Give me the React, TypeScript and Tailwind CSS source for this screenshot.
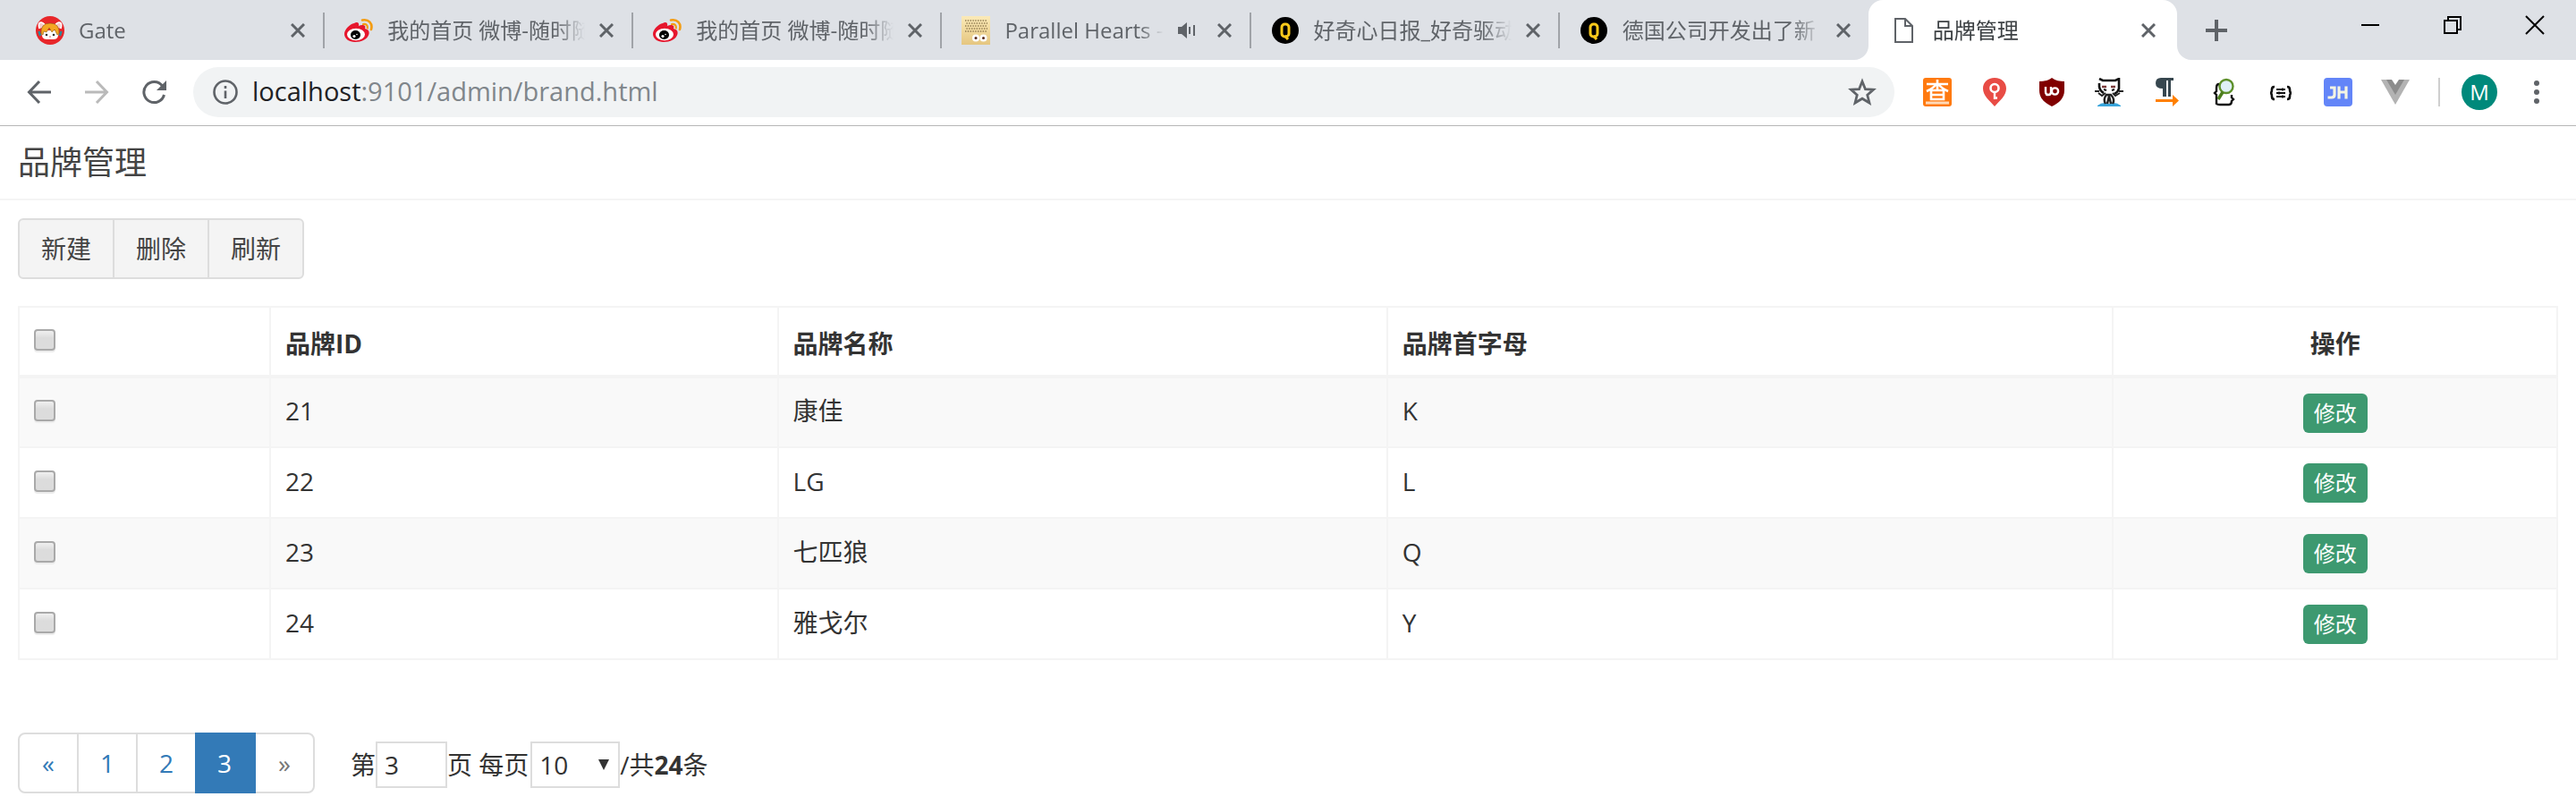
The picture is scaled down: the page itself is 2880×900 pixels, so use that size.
import { useState } from 'react';
import type { ReactNode } from 'react';

type TabInfo = { title: string; icon: ReactNode; audio?: boolean; active?: boolean };

function GateIcon() {
  return (
    <svg viewBox="0 0 32 32" className="h-8 w-8">
      <circle cx="16" cy="16" r="16" fill="#e8262a" />
      <path d="M4 14 Q2 7 6 7 Q10 8 11 12 M28 14 Q30 7 26 7 Q22 8 21 12" fill="#f6c9c9" stroke="#fff" strokeWidth="1.600" />
      <path d="M6 16 Q6 26 12 26 H20 Q26 26 26 16 Z" fill="#fff" />
      <path d="M6 20 Q5 8 16 8 Q27 8 26 20 L24 21 L21 15 L18 18 L15 13 L12 18 L9 17 L8 21 Z" fill="#f5a623" stroke="#8a5a1a" strokeWidth="0.600" />
      <circle cx="12" cy="21" r="1.300" fill="#333" />
      <circle cx="20" cy="21" r="1.300" fill="#333" />
      <path d="M15 23 H17" stroke="#d66" strokeWidth="1" />
      <path d="M3.500 17 L5 22 M28.500 17 L27 22" stroke="#2b8a99" strokeWidth="2.400" />
    </svg>
  );
}

function WeiboIcon() {
  return (
    <svg viewBox="0 0 32 32" className="h-8 w-8">
      <path d="M11 8 C14 6 17 7 16 11 C20 9 25 10 23 14 C27 15 28 17 27.500 20 C26 26 19 29 12 29 C5 29 0 25 0 20 C0 15 6 9 11 8 Z" fill="#e6162d" />
      <ellipse cx="13" cy="20.500" rx="10" ry="6.800" fill="#fff" />
      <ellipse cx="12.500" cy="21" rx="5.500" ry="5" fill="#000" />
      <circle cx="11" cy="22.500" r="1.600" fill="#fff" />
      <circle cx="14" cy="20.500" r="0.800" fill="#fff" />
      <path d="M20 4.500 C27 3 32 8 30 15" fill="none" stroke="#f39c12" strokeWidth="2.600" strokeLinecap="round" />
      <path d="M21 9 C24.500 8.500 26.500 10.500 25.800 13.500" fill="none" stroke="#f39c12" strokeWidth="2.200" strokeLinecap="round" />
    </svg>
  );
}

function BoxIcon() {
  return (
    <svg viewBox="0 0 32 32" className="h-8 w-8">
      <defs>
        <linearGradient id="box" x1="0" y1="0" x2="0" y2="1">
          <stop offset="0" stopColor="#fbeab8" />
          <stop offset="1" stopColor="#e5c680" />
        </linearGradient>
      </defs>
      <rect width="32" height="32" fill="url(#box)" />
      {[5, 8, 11, 14, 17].map((y) => (
        <path key={y} d={`M4 ${y} H29`} stroke="#8f7a50" strokeWidth="1.400" strokeDasharray="1.400 1.400" strokeDashoffset={y % 2 ? 0 : 1.4} />
      ))}
      <circle cx="16" cy="24.500" r="4" fill="#fff" />
      <circle cx="24.500" cy="24.500" r="4" fill="#fff" />
      <circle cx="16" cy="24.500" r="1.500" fill="#5a2b1b" />
      <circle cx="24.500" cy="24.500" r="1.500" fill="#5a2b1b" />
    </svg>
  );
}

function QIcon() {
  return (
    <svg viewBox="0 0 32 32" className="h-8 w-8">
      <circle cx="16" cy="16" r="15" fill="#000" />
      <rect x="12" y="9" width="8" height="14" rx="3.500" fill="none" stroke="#fbc91b" strokeWidth="3" />
      <path d="M15.500 22 L19 26" stroke="#fbc91b" strokeWidth="3" />
    </svg>
  );
}

function FileIcon() {
  return (
    <svg viewBox="0 0 32 32" className="h-8 w-8" fill="none" stroke="#5f6368" strokeWidth="2">
      <path d="M6 3 H17 L25 11 V29 H6 Z" />
      <path d="M17 3 V11 H25" />
    </svg>
  );
}

const tabs: TabInfo[] = [
  { title: 'Gate', icon: <GateIcon /> },
  { title: '我的首页 微博-随时随', icon: <WeiboIcon /> },
  { title: '我的首页 微博-随时随', icon: <WeiboIcon /> },
  { title: 'Parallel Hearts -', icon: <BoxIcon />, audio: true },
  { title: '好奇心日报_好奇驱动', icon: <QIcon /> },
  { title: '德国公司开发出了新', icon: <QIcon /> },
  { title: '品牌管理', icon: <FileIcon />, active: true },
];

function Tab({ title, icon, audio, active }: TabInfo) {
  return (
    <div
      role="tab"
      aria-selected={!!active}
      className={
        active
          ? 'relative flex h-full min-w-0 flex-1 items-center rounded-t-2xl bg-white pr-5 pl-6 text-[#3c4043]'
          : 'flex h-full min-w-0 flex-1 items-center pr-4 pl-[22px] text-[#5f6368]'
      }
    >
      {active && (
        <>
          <svg viewBox="0 0 16 16" className="absolute bottom-0 -left-4 h-4 w-4">
            <path d="M16 0 V16 H0 A16 16 0 0 0 16 0 Z" fill="#fff" />
          </svg>
          <svg viewBox="0 0 16 16" className="absolute -right-4 bottom-0 h-4 w-4">
            <path d="M0 0 V16 H16 A16 16 0 0 1 0 0 Z" fill="#fff" />
          </svg>
        </>
      )}
      <span className="shrink-0">{icon}</span>
      <span className="ml-4 min-w-0 flex-1 overflow-hidden mask-r-from-85% text-2xl whitespace-nowrap">{title}</span>
      {audio && (
        <svg viewBox="0 0 20 20" className="mr-2 ml-4 h-5 w-5 shrink-0">
          <path d="M0 6 H4 L10 1 V19 L4 14 H0 Z" fill="#5f6368" />
          <path d="M13 6 V14 M18 4 V16" stroke="#5f6368" strokeWidth="2" />
        </svg>
      )}
      <button type="button" aria-label="关闭标签页" className="ml-3 shrink-0 p-1">
        <svg viewBox="0 0 16 16" className="h-4 w-4" stroke="#5f6368" strokeWidth="3">
          <path d="M1 1 L15 15 M15 1 L1 15" />
        </svg>
      </button>
    </div>
  );
}

function WindowButton({ label, d }: { label: string; d: string }) {
  return (
    <button type="button" aria-label={label} className="flex h-14 w-[92px] items-center justify-center">
      <svg viewBox="0 0 22 22" className="h-[22px] w-[22px]" fill="none" stroke="#000" strokeWidth="2">
        <path d={d} />
      </svg>
    </button>
  );
}

function TabStrip() {
  return (
    <div className="flex h-[67px] bg-[#dee1e6]">
      <div role="tablist" className="flex min-w-0 flex-1 items-center pl-[18px]">
        {tabs.map((t, i) => (
          <div key={i} className="flex h-full min-w-0 flex-1 items-center">
            <Tab {...t} />
            {i < 5 && <span className="h-10 w-[2px] bg-[#a0a3a8]" />}
          </div>
        ))}
      </div>
      <button type="button" aria-label="新标签页" className="flex w-[88px] items-center justify-center">
        <svg viewBox="0 0 24 24" className="h-6 w-6" stroke="#5f6368" strokeWidth="4">
          <path d="M12 0 V24 M0 12 H24" />
        </svg>
      </button>
      <div className="ml-[82px] flex">
        <WindowButton label="最小化" d="M1 11 H21" />
        <WindowButton label="还原" d="M2 6 H16 V20 H2 Z M6 6 V2 H20 V16 H16" />
        <WindowButton label="关闭" d="M1 1 L21 21 M21 1 L1 21" />
      </div>
    </div>
  );
}

const extensions: { name: string; art: ReactNode }[] = [
  {
    name: '查',
    art: (
      <>
        <rect width="32" height="32" rx="3" fill="#ff7a10" />
        <path d="M4 7 H28 M16 2 V14 M15 7 Q11 12 4 15 M17 7 Q21 12 28 15 M9 14 H23 V24 H9 Z M9 19 H23" fill="none" stroke="#fff" strokeWidth="2.600" />
        <path d="M3 28 H29" stroke="#ffd9b8" strokeWidth="3" />
      </>
    ),
  },
  {
    name: '密钥',
    art: (
      <>
        <path d="M16 0 C8 0 3 5 3 12 C3 20 10 25 16 32 C22 25 29 20 29 12 C29 5 24 0 16 0 Z" fill="#e84c45" />
        <circle cx="16" cy="11.500" r="4.500" fill="none" stroke="#fff" strokeWidth="2.600" />
        <path d="M16 16 V24 M16 22.500 H19" stroke="#fff" strokeWidth="2.400" />
      </>
    ),
  },
  {
    name: '拦截',
    art: (
      <>
        <path d="M16 0 C20 3 25 4 30 4 V14 C30 23 24 28 16 32 C8 28 2 23 2 14 V4 C7 4 12 3 16 0 Z" fill="#800000" />
        <path d="M9 10 V16 Q9 19 12 19 Q15 19 15 16 V10" fill="none" stroke="#fff" strokeWidth="2.400" />
        <circle cx="19.500" cy="15" r="3.600" fill="none" stroke="#fff" strokeWidth="2.400" />
      </>
    ),
  },
  {
    name: '章鱼猫',
    art: (
      <>
        <path d="M3 31 Q9 26 16 29 Q23 26 29 31 V32 H3 Z" fill="#38a5dc" />
        <path d="M5 1 L9 2 H23 L27 1 V12 Q26 17 21 18 H12 Q6 17 5 10 Z" fill="#fff" />
        <path d="M5 1 L9 3 H23 L27 1 V12 Q26 16 22 18 M5 6 V10 Q6 15 10 17" fill="none" stroke="#111" strokeWidth="2.600" />
        <path d="M8 10 H13 M18 10 H23" stroke="#7a3a3a" strokeWidth="2.400" />
        <path d="M10 13 L13 14 M22 13 L19 14" stroke="#111" strokeWidth="2" />
        <path d="M0 15 H5 M27 15 H32 M4 17 L8 20 L12 17 M28 17 L23 20 L20 17" fill="none" stroke="#222" strokeWidth="2" />
        <path d="M12 29 Q9 24 13 19 H18 Q23 24 20 29 M16 20 L14 29 M16 20 L18 29" fill="none" stroke="#222" strokeWidth="2.400" />
      </>
    ),
  },
  {
    name: '段落',
    art: (
      <>
        <path d="M10 0 H24 V3 H21 V21 H18 V3 H16 V21 H12 V12 Q4 12 4 6 Q4 0 10 0 Z" fill="#37474f" />
        <path d="M4 24 H23 V19 L30 25.500 L23 32 V27 H4 Z" fill="#ff8000" />
      </>
    ),
  },
  {
    name: '查看器',
    art: (
      <>
        <path d="M11 7 Q8 7 8 11 V15 L6 17 L8 19 V29 Q9 30 12 30 H22 Q25 30 25 26 L27 24 L25 22 V19" fill="none" stroke="#111" strokeWidth="2.400" />
        <circle cx="19" cy="9.500" r="7.500" fill="#dff0f8" stroke="#5d8f2b" strokeWidth="2.400" />
        <path d="M15 16 L10 24" stroke="#4c7d1e" strokeWidth="3.600" />
      </>
    ),
  },
  {
    name: '格式化',
    art: (
      <g fill="none" stroke="#111" strokeWidth="2.600">
        <path d="M9 10 Q6 10 6 13 Q6 17 4 17 Q6 17 6 21 Q6 24 9 24 M23 10 Q26 10 26 13 Q26 17 28 17 Q26 17 26 21 Q26 24 23 24" />
        <path d="M11 13 H21 M11 17 H21 M11 21 H21" strokeWidth="1.800" />
        <path d="M18 11.500 V14.500 M14 15.500 V18.500 M18 19.500 V22.500" strokeWidth="1.800" />
      </g>
    ),
  },
  {
    name: 'JH',
    art: (
      <>
        <rect width="32" height="32" rx="4" fill="#6385f8" />
        <path d="M7 11 H12 V19 Q12 22 8.500 22 H4.500 M17 9.500 V23.500 M25 9.500 V23.500 M17 16 H25" fill="none" stroke="#f4f4e4" strokeWidth="3.200" />
      </>
    ),
  },
  {
    name: 'Vue',
    art: (
      <>
        <path d="M0 2 H32 L16 30 Z" fill="#b3b3b3" />
        <path d="M6 2 H26 L16 19 Z" fill="#8c8c8c" />
        <path d="M12 2 H20 L16 8 Z" fill="#fff" />
      </>
    ),
  },
];

function NavButton({ label, children }: { label: string; children: ReactNode }) {
  return (
    <button type="button" aria-label={label} className="flex h-16 w-16 shrink-0 items-center justify-center">
      {children}
    </button>
  );
}

function Toolbar() {
  return (
    <div className="flex h-[74px] items-center border-b border-[#b6b6b6] bg-white pb-px pl-3">
      <NavButton label="后退">
        <svg viewBox="0 0 28 28" className="h-7 w-7" fill="none" stroke="#5f6368" strokeWidth="3">
          <path d="M27 14 H3 M14 2 L2.500 14 L14 26" />
        </svg>
      </NavButton>
      <NavButton label="前进">
        <svg viewBox="0 0 28 28" className="h-7 w-7" fill="none" stroke="#bababa" strokeWidth="3">
          <path d="M1 14 H25 M14 2 L25.500 14 L14 26" />
        </svg>
      </NavButton>
      <NavButton label="刷新页面">
        <svg viewBox="0 0 28 28" className="h-7 w-7">
          <path d="M23.500 7 A11.500 11.500 0 1 0 25.500 17" fill="none" stroke="#5f6368" strokeWidth="3" />
          <path d="M28 1 V12 H17 Z" fill="#5f6368" />
        </svg>
      </NavButton>
      <div className="ml-3 flex h-14 min-w-0 flex-1 items-center rounded-full bg-[#f1f3f4] pr-5 pl-[22px]">
        <svg viewBox="0 0 28 28" className="h-7 w-7 shrink-0" fill="none" stroke="#5f6368" strokeWidth="2.600">
          <circle cx="14" cy="14" r="12.500" />
          <path d="M14 12.500 V21 M14 7 V10" />
        </svg>
        <div className="ml-4 flex-1 pb-[2px] text-[29px] text-[#80868b]">
          <span className="text-[#202124]">localhost</span>:9101/admin/brand.html
        </div>
        <button type="button" aria-label="收藏">
          <svg viewBox="0 0 28 28" className="h-8 w-8" fill="none" stroke="#5f6368" strokeWidth="2.400">
            <path d="M14 3.500 L17 11 L25 11.500 L19 16.800 L21 24.500 L14 20.300 L7 24.500 L9 16.800 L3 11.500 L11 11 Z" />
          </svg>
        </button>
      </div>
      <div className="ml-8 flex shrink-0 items-center gap-8">
        {extensions.map((e) => (
          <button key={e.name} type="button" aria-label={e.name}>
            <svg viewBox="0 0 32 32" className="h-8 w-8">
              {e.art}
            </svg>
          </button>
        ))}
      </div>
      <span className="ml-8 h-8 w-[2px] bg-[#cfcfcf]" />
      <button type="button" className="ml-6 h-10 w-10 shrink-0 rounded-full bg-[#00897b] text-2xl leading-10 text-white">
        M
      </button>
      <button type="button" aria-label="菜单" className="mr-7 ml-7 flex h-10 w-8 items-center justify-center">
        <svg viewBox="0 0 6 26" className="h-[26px] w-[6px]" fill="#5f6368">
          <circle cx="3" cy="3" r="3" />
          <circle cx="3" cy="13" r="3" />
          <circle cx="3" cy="23" r="3" />
        </svg>
      </button>
    </div>
  );
}

const brands = [
  { id: 21, name: '康佳', letter: 'K' },
  { id: 22, name: 'LG', letter: 'L' },
  { id: 23, name: '七匹狼', letter: 'Q' },
  { id: 24, name: '雅戈尔', letter: 'Y' },
];

function Check({ label }: { label: string }) {
  return (
    <input
      type="checkbox"
      aria-label={label}
      className="block h-6 w-6 appearance-none rounded-[4px] border-2 border-[#a9a9a9] bg-linear-to-b from-[#f0f0f0] to-[#dcdcdc] to-40% shadow-[0_2px_0_#ececec] checked:bg-[#337ab7]"
    />
  );
}

function BrandTable() {
  const th = 'border-2 border-b-4 border-[#f4f4f4] px-4 pt-4 pb-3 text-left align-middle font-bold';
  const td = 'border-2 border-[#f4f4f4] px-4 pt-3 pb-4 align-middle';
  return (
    <table className="mt-[30px] w-full table-fixed border-collapse">
      <colgroup>
        <col className="w-[9.9%]" />
        <col className="w-[20%]" />
        <col className="w-[24%]" />
        <col className="w-[28.6%]" />
        <col className="w-[17.5%]" />
      </colgroup>
      <thead>
        <tr className="h-[78px]">
          <th className="border-2 border-b-4 border-[#f4f4f4] px-4 pt-2 pb-3 align-middle">
            <Check label="全选" />
          </th>
          <th className={th}>品牌ID</th>
          <th className={th}>品牌名称</th>
          <th className={th}>品牌首字母</th>
          <th className="border-2 border-b-4 border-[#f4f4f4] px-4 pt-4 pb-3 text-center align-middle font-bold">操作</th>
        </tr>
      </thead>
      <tbody>
        {brands.map((b) => (
          <tr key={b.id} className="h-[79px] odd:bg-[#f9f9f9]">
            <td className={td}>
              <Check label={`选择 ${b.name}`} />
            </td>
            <td className={td}>{b.id}</td>
            <td className={td}>{b.name}</td>
            <td className={td}>{b.letter}</td>
            <td className="border-2 border-[#f4f4f4] px-4 text-center align-middle">
              <button type="button" className="h-11 rounded-md bg-[#3d9970] px-3 align-middle text-2xl text-white">
                修改
              </button>
            </td>
          </tr>
        ))}
      </tbody>
    </table>
  );
}

function Pager() {
  const [page, setPage] = useState('3');
  const cell = 'flex w-[66px] items-center justify-center text-[#337ab7]';
  return (
    <div className="mt-[81px] flex items-center">
      <nav aria-label="分页" className="flex h-[68px] divide-x-2 divide-[#ddd] rounded-lg border-2 border-[#ddd]">
        <a href="#prev" className={cell}>«</a>
        <a href="#1" className={cell}>1</a>
        <a href="#2" className={cell}>2</a>
        <a href="#3" aria-current="page" className="-my-[2px] -ml-[2px] flex w-[68px] items-center justify-center border-[#337ab7] bg-[#337ab7] text-white">3</a>
        <a href="#next" className="flex w-16 items-center justify-center text-[#777]">»</a>
      </nav>
      <div className="ml-10 flex items-center pt-1 leading-10">
        <label htmlFor="page">第</label>
        <input
          id="page"
          value={page}
          onChange={(e) => setPage(e.target.value)}
          className="h-[52px] w-20 border-2 border-[#ddd] px-2"
        />
        <label htmlFor="size">页 每页</label>
        <div className="relative ml-[2px]">
          <select id="size" defaultValue="10" className="block h-[52px] w-[100px] appearance-none border-2 border-[#ddd] bg-white px-2">
            <option>10</option>
            <option>20</option>
            <option>50</option>
          </select>
          <svg viewBox="0 0 12 12" className="pointer-events-none absolute top-[20px] right-3 h-3 w-3">
            <path d="M0 0 H12 L6 12 Z" fill="#333" />
          </svg>
        </div>
        <span>/共<b>24</b>条</span>
      </div>
    </div>
  );
}

export default function App() {
  return (
    <div className="min-h-screen bg-white font-['Open_Sans','Noto_Sans_CJK_SC',sans-serif] text-[28px] leading-10 text-[#333]">
      <TabStrip />
      <Toolbar />
      <header className="flex h-[83px] items-center border-b-2 border-[#f4f4f4] px-5">
        <h1 className="text-4xl text-[#444]">品牌管理</h1>
      </header>
      <main className="px-5 pt-5">
        <div className="inline-flex h-[68px] divide-x-2 divide-[#ddd] rounded-md border-2 border-[#ddd] bg-[#f4f4f4] align-top text-[#444]">
          <button type="button" className="px-6">新建</button>
          <button type="button" className="px-6">删除</button>
          <button type="button" className="px-6">刷新</button>
        </div>
        <BrandTable />
        <Pager />
      </main>
    </div>
  );
}
